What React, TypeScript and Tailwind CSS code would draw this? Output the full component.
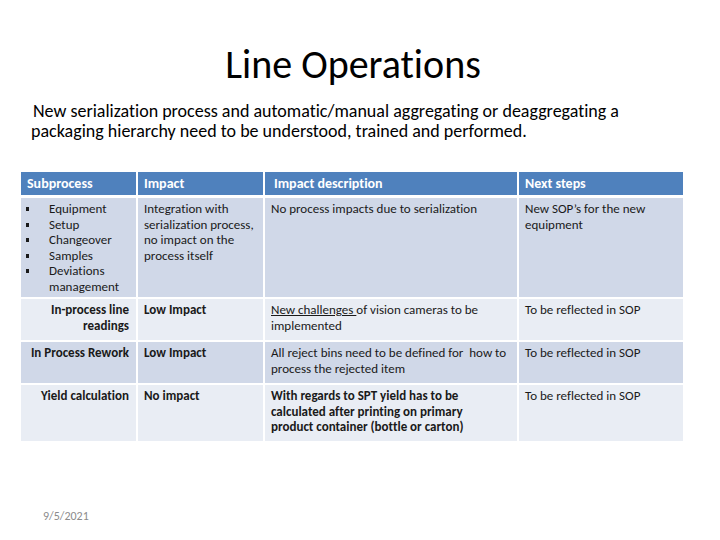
const font = { fontFamily: "Carlito, Lato, 'Liberation Sans', sans-serif" };

const cell = "px-[6px] pt-[3px] text-[13px] leading-[15.6px] text-[#1a1a1a]";
const head = "bg-[#4f81bd] text-white font-bold text-[14px] flex items-center";

export default function App() {
  const odd = "bg-[#d0d8e8]";
  const even = "bg-[#e9edf4]";
  return (
    <div className="w-[720px] h-[540px] bg-white flex flex-col [font-variant-ligatures:none]" style={font}>
      <h1 className="text-center text-[40px] leading-[46px] pt-[42px] pr-[14px] text-black">Line Operations</h1>
      <p className="pl-[31px] indent-[2px] w-[640px] mt-[13px] text-[18px] leading-[20px] text-black">
        New serialization process and automatic/manual aggregating or deaggregating a packaging hierarchy need to be understood, trained and performed.
      </p>
      <div className="ml-[21px] mt-[31px] grid grid-cols-[115px_125px_252px_164px] grid-rows-[23px_100px_41px_41px_56px] gap-x-[2px] gap-y-[2px]">
        <div className={`${head} px-[6px]`}>Subprocess</div>
        <div className={`${head} px-[6px]`}>Impact</div>
        <div className={`${head} px-[9px]`}>Impact description</div>
        <div className={`${head} px-[6px]`}>Next steps</div>

        <div className={`${odd} ${cell} mt-[1px] pl-[4px]`}>
          {["Equipment", "Setup", "Changeover", "Samples", "Deviations management"].map((t) => (
            <div key={t} className="flex">
              <span className="w-[24px] shrink-0 pl-[1px] flex items-start pt-[6px]">
                <span className="block w-[3px] h-[4px] bg-[#1a1a1a]" />
              </span>
              <span>{t}</span>
            </div>
          ))}
        </div>
        <div className={`${odd} ${cell} mt-[1px]`}>Integration with serialization process, no impact on the process itself</div>
        <div className={`${odd} ${cell} mt-[1px]`}>No process impacts due to serialization</div>
        <div className={`${odd} ${cell} mt-[1px]`}>New SOP’s for the new equipment</div>

        <div className={`${even} ${cell} font-bold text-right pr-[7px]`}>In-process line<br />readings</div>
        <div className={`${even} ${cell} font-bold`}>Low Impact</div>
        <div className={`${even} ${cell}`}><span className="underline">New challenges </span>of vision cameras to be implemented</div>
        <div className={`${even} ${cell}`}>To be reflected in SOP</div>

        <div className={`${odd} ${cell} font-bold text-right pr-[7px] pl-[4px]`}>In Process Rework</div>
        <div className={`${odd} ${cell} font-bold`}>Low Impact</div>
        <div className={`${odd} ${cell}`}>All reject bins need to be defined for&nbsp; how to process the rejected item</div>
        <div className={`${odd} ${cell}`}>To be reflected in SOP</div>

        <div className={`${even} ${cell} font-bold text-right pr-[7px]`}>Yield calculation</div>
        <div className={`${even} ${cell} font-bold`}>No impact</div>
        <div className={`${even} ${cell} font-bold pr-[36px]`}>With regards to SPT yield has to be calculated after printing on primary product container (bottle or carton)</div>
        <div className={`${even} ${cell}`}>To be reflected in SOP</div>
      </div>
      <div className="mt-auto mb-[15px] ml-[43px] text-[12px] text-[#8b8b8b]">9/5/2021</div>
    </div>
  );
}
